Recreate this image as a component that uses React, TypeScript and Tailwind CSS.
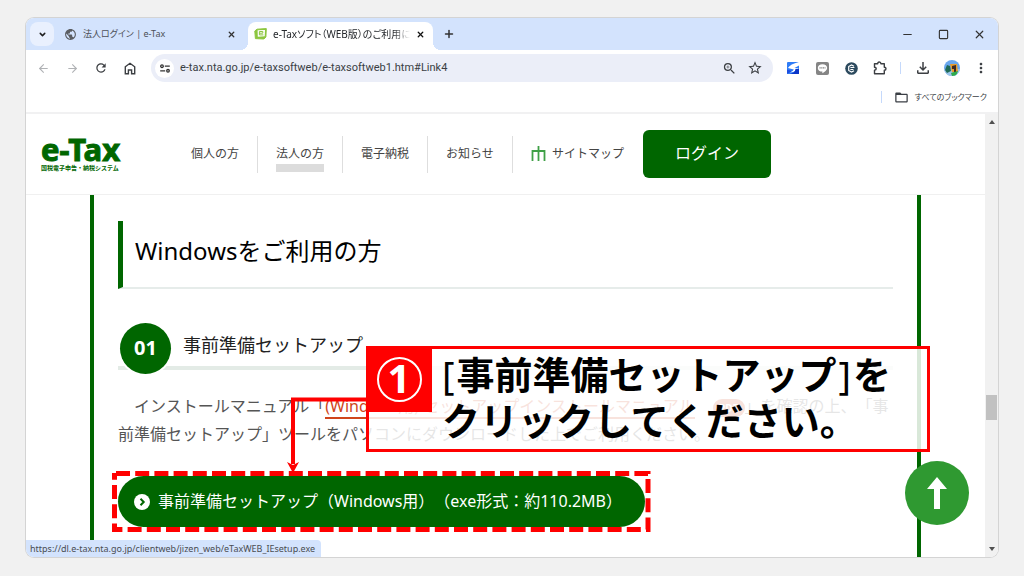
import type { ReactNode } from "react";
import {
  ArrowLeft,
  ArrowRight,
  ChevronDown,
  Minus,
  Plus,
  Square,
  X,
} from "lucide-react";
import {
  MdFolderOpen,
  MdMoreVert,
  MdOutlineFileDownload,
  MdPublic,
  MdRefresh,
  MdStarBorder,
  MdZoomIn,
} from "react-icons/md";

const NAV = [
  { label: "個人の方", active: false },
  { label: "法人の方", active: true },
  { label: "電子納税", active: false },
  { label: "お知らせ", active: false },
];

function IconButton({ label, children }: { label: string; children: ReactNode }) {
  return (
    <button
      type="button"
      aria-label={label}
      className="flex size-5 shrink-0 items-center justify-center text-[#3c3f43]"
    >
      {children}
    </button>
  );
}

function TabBar() {
  return (
    <div className="flex h-8 shrink-0 items-stretch bg-[#d3e3fd] pl-1">
      <button
        type="button"
        aria-label="タブを検索"
        className="mt-1 flex size-6 items-center justify-center rounded-lg bg-[#e9f0fe] text-[#1f1f1f]"
      >
        <ChevronDown size={9} strokeWidth={4} />
      </button>
      <div className="ml-2.5 flex w-[184px] items-center gap-1.5 pr-3">
        <MdPublic size={13} className="shrink-0 text-[#5a5d62]" />
        <span className="min-w-0 flex-1 whitespace-nowrap text-[9px] text-[#4c5057] [font-feature-settings:'palt']">
          法人ログイン | e-Tax
        </span>
        <button type="button" aria-label="タブを閉じる" className="text-[#333]">
          <X size={9} strokeWidth={3.5} />
        </button>
      </div>
      <div className="relative mt-1 flex w-[185px] items-center gap-1.5 rounded-t-lg bg-white pb-1 pl-1.5 pr-2">
        <span className="absolute -left-2 bottom-0 size-2 bg-[radial-gradient(circle_at_0_0,#d3e3fd_8px,#fff_8px)]" />
        <span className="absolute -right-2 bottom-0 size-2 bg-[radial-gradient(circle_at_100%_0,#d3e3fd_8px,#fff_8px)]" />
        <svg viewBox="0 0 13 12" className="h-3 w-[13px] shrink-0">
          <path d="M.8 3 3 1.200l9.300-.6-.4 8.400-2 2-8.500-.4Z" fill="#8cc63f" stroke="#8cc63f" strokeLinejoin="round" />
          <path d="M3.600 2.300 11 1.900l-.3 6.300-6.900.5Z" fill="#fff" />
          <path d="M5.400 5.200h3.400V3.500H5.400v3.400h4" fill="none" stroke="#8cc63f" strokeWidth="1" />
        </svg>
        <span className="min-w-0 flex-1 overflow-hidden whitespace-nowrap text-[10px] text-[#25282c] [font-feature-settings:'palt'] [mask-image:linear-gradient(to_right,#000_88%,transparent)]">
          e-Taxソフト（WEB版）のご利用に
        </span>
        <button type="button" aria-label="タブを閉じる" className="text-[#111]">
          <X size={9} strokeWidth={3.5} />
        </button>
      </div>
      <button type="button" aria-label="新しいタブ" className="ml-2.5 text-[#333]">
        <Plus size={12} strokeWidth={3} />
      </button>
      <div className="ml-auto flex items-center gap-6 pr-3 text-[#333]">
        <button type="button" aria-label="最小化">
          <Minus size={13} />
        </button>
        <button type="button" aria-label="最大化">
          <Square size={11} strokeWidth={2.5} />
        </button>
        <button type="button" aria-label="閉じる">
          <X size={13} strokeWidth={2.2} />
        </button>
      </div>
    </div>
  );
}

function Toolbar() {
  return (
    <div className="shrink-0 border-b-2 border-[#f1f1f2] bg-white">
      <div className="flex items-center px-[7px] pt-1">
        <div className="flex gap-[9px]">
          <button type="button" aria-label="戻る" className="flex size-5 items-center justify-center text-[#b0b2b5]">
            <ArrowLeft size={13} />
          </button>
          <button type="button" aria-label="進む" className="flex size-5 items-center justify-center text-[#b0b2b5]">
            <ArrowRight size={13} />
          </button>
          <IconButton label="再読み込み">
            <MdRefresh size={14} />
          </IconButton>
          <IconButton label="ホーム">
            <svg viewBox="0 0 12 13" className="h-[13px] w-3" fill="none" stroke="currentColor" strokeWidth="1.4">
              <path d="M1.3 4.8 6 1.3l4.7 3.5v7H7.6V8H4.4v3.8H1.3Z" />
            </svg>
          </IconButton>
        </div>
        <div className="ml-[11px] flex h-7 min-w-0 flex-1 items-center rounded-full bg-[#ebeef8] pl-1 pr-2">
          <span className="flex size-[19px] shrink-0 items-center justify-center rounded-full bg-white">
            <svg viewBox="0 0 10 9" className="h-[9px] w-2.5" fill="none" stroke="#333" strokeWidth="1.3">
              <circle cx="2" cy="2.2" r="1.3" />
              <path d="M4.8 2.2H9.8M.2 6.8h5" />
              <circle cx="8" cy="6.8" r="1.3" />
            </svg>
          </span>
          <input
            aria-label="アドレス"
            defaultValue="e-tax.nta.go.jp/e-taxsoftweb/e-taxsoftweb1.htm#Link4"
            className="ml-1.5 min-w-0 flex-1 bg-transparent font-['Roboto','Noto_Sans_CJK_JP',sans-serif] text-[11px] text-[#3a3e44] outline-none"
          />
          <div className="flex gap-1.5">
            <IconButton label="拡大">
              <MdZoomIn size={15} />
            </IconButton>
            <IconButton label="ブックマークに追加">
              <MdStarBorder size={16} />
            </IconButton>
          </div>
        </div>
        <div className="ml-2.5 flex items-center gap-[9px]">
          <IconButton label="画面キャプチャ">
            <svg viewBox="0 0 12 12" className="size-3">
              <rect width="12" height="12" rx="1" fill="#2f7cf6" />
              <path d="M0 7.500 5 9 0 12Z" fill="#1d4fe0" />
              <path d="M12 0v3.500L7.500 6l4 .5Q9.500 10 3 10.500 6.500 9 6.800 7.500L1 6Q3 2 12 0Z" fill="#fff" />
              <path d="M8.500 7H12v5H3q5-1 5.500-5Z" fill="#0a35c8" />
            </svg>
          </IconButton>
          <IconButton label="LINE">
            <svg viewBox="0 0 13 13" className="size-[13px]">
              <rect width="13" height="13" rx="2" fill="#858585" />
              <path d="M6.500 2.200c2.700 0 4.700 1.600 4.700 3.700 0 2.300-2.700 4-4.900 5.400l.1-1.700c-2.700 0-4.600-1.600-4.600-3.700s2-3.700 4.700-3.700Z" fill="#fff" />
              <path d="M3.500 5.900h6" stroke="#858585" strokeWidth="1.200" strokeDasharray="1.200 .5" />
            </svg>
          </IconButton>
          <IconButton label="拡張機能 C">
            <svg viewBox="0 0 13 13" className="size-[13px]">
              <circle cx="6.500" cy="6.500" r="6.300" fill="#2c4a5e" />
              <path d="M9 4.300 6.500 3 3.700 4.600v3.800l2.800 1.600L9 8.700M5.400 5.500h4M5.400 7.500h3" fill="none" stroke="#fff" strokeWidth="1.200" />
            </svg>
          </IconButton>
          <IconButton label="拡張機能">
            <svg viewBox="0 0 14 14" className="size-3.5" fill="none" stroke="currentColor" strokeWidth="1.400" strokeLinejoin="round">
              <path d="M1.500 2.800h3.200q0-1.800 1.600-1.800t1.600 1.800h3.400v3.400q1.700 0 1.700 1.500t-1.700 1.500v3.500H1.500V9.300q1.700-.2 1.700-1.600T1.500 6.200Z" />
            </svg>
          </IconButton>
        </div>
        <span className="ml-2.5 h-3 w-px bg-[#c5d9fb]" />
        <div className="ml-3 flex items-center gap-[9px]">
          <IconButton label="ダウンロード">
            <MdOutlineFileDownload size={18} />
          </IconButton>
          <IconButton label="プロフィール">
            <svg viewBox="0 0 16 16" className="size-4">
              <clipPath id="avatar">
                <circle cx="8" cy="8" r="8" />
              </clipPath>
              <g clipPath="url(#avatar)">
                <path d="M0 0h16v16H0Z" fill="#6aa7ee" />
                <path d="M0 9h16v7H0Z" fill="#9bc4ea" />
                <path d="M1 10 3 5l3 1 1 5-4 2Z" fill="#1f6b57" />
                <path d="M6 4h7l1 8H8Z" fill="#e79b2c" />
                <path d="m8 6 4-1v7h-2V9H8Z" fill="#3b2a24" />
                <path d="m7 13 3-1 4-1-2 5H8Z" fill="#2eab4a" />
              </g>
            </svg>
          </IconButton>
          <IconButton label="メニュー">
            <MdMoreVert size={16} />
          </IconButton>
        </div>
      </div>
      <div className="flex h-[30px] items-center justify-end pr-[11px]">
        <span className="h-3 w-px bg-[#c5d9fb]" />
        <button
          type="button"
          className="ml-3 flex items-center gap-1.5 text-[8px] text-[#3a3e44] [font-feature-settings:'palt']"
        >
          <MdFolderOpen size={15} />
          すべてのブックマーク
        </button>
      </div>
    </div>
  );
}

function SiteHeader() {
  return (
    <header className="flex h-[81px] shrink-0 items-start border-b border-[#f0f0f0] pl-[15px] pt-4">
      <a href="#top" className="flex w-[132px] shrink-0 flex-col text-[#006600]">
        <span className="mt-1 text-[31px] font-bold leading-[30px] [-webkit-text-stroke:1px_#006600]">e-Tax</span>
        <span className="whitespace-nowrap text-[6px] font-bold leading-2">
          国税電子申告・納税システム
        </span>
      </a>
      <nav className="mt-1.5 flex">
        {NAV.map((item) => (
          <a
            key={item.label}
            href="#nav"
            className="flex h-[37px] w-[85px] flex-col items-center border-r border-[#dedede] pt-2 text-xs leading-5 text-[#444]"
          >
            {item.label}
            {item.active && <span className="h-2 w-12 shrink-0 bg-[#dcdcdc]" />}
          </a>
        ))}
        <a href="#sitemap" className="ml-[18px] flex h-[37px] items-start gap-1.5 pt-2 text-xs leading-5 text-[#444]">
          <svg viewBox="0 0 15 15" className="mt-0.5 size-[15px]" fill="none" stroke="#3fa046" strokeWidth="1.800">
            <path d="M1.500 15V5h12v10M7.500 0v15" />
          </svg>
          サイトマップ
        </a>
      </nav>
      <button
        type="button"
        className="ml-[19px] h-12 w-32 shrink-0 rounded-md bg-[#006600] pb-0.5 text-base text-white"
      >
        ログイン
      </button>
    </header>
  );
}

function Guide() {
  return (
    <main className="mx-16 flex-1 border-x-4 border-[#006600] px-6 pt-[26px]">
      <h1 className="flex h-[68px] items-center border-b-2 border-l-[5px] border-b-[#e6ecea] border-l-[#006600] pb-1.5 pl-3 text-2xl text-black">
        Windowsをご利用の方
      </h1>
      <div className="mt-[34px] flex h-[47px] items-start gap-3 border-b-4 border-[#e3ebe6] pl-0.5">
        <span className="z-10 flex size-[51px] shrink-0 items-center justify-center rounded-full bg-[#006600] pb-0.5 text-xl font-bold text-white ring-2 ring-white">
          01
        </span>
        <h2 className="pt-2 text-lg leading-7 text-[#222]">事前準備セットアップ</h2>
      </div>
      <p className="mt-[22px] indent-4 whitespace-nowrap text-base leading-7 text-[#555]">
        インストールマニュアル「
        <a href="#manual" className="border-b-2 border-[#d0451b] text-[#d0451b]">
          (Windows用) セットアップインストールマニュアル
        </a>
        <span className="ml-[18px] inline-flex h-[18px] w-8 items-center justify-center rounded-full bg-[#d0451b] indent-0 text-[10px] font-bold text-white">
          PDF
        </span>
        」を確認の上、「事
        <br />
        前準備セットアップ」ツールをパソコンにダウンロードした上でご利用ください。
      </p>
      <a
        href="#download"
        className="mt-7 inline-flex h-[51px] w-[527px] items-center gap-2 whitespace-nowrap rounded-full bg-[#006600] pb-0.5 pl-4 text-base text-white"
      >
        <svg viewBox="0 0 16 16" className="mt-0.5 size-4 shrink-0">
          <circle cx="8" cy="8" r="8" fill="#fff" />
          <path d="m6.500 4.800 3.200 3.200-3.200 3.200" fill="none" stroke="#006600" strokeWidth="2" />
        </svg>
        事前準備セットアップ（Windows用）（exe形式：約110.2MB）
      </a>
    </main>
  );
}

function Scrollbar() {
  return (
    <div className="flex w-[13px] shrink-0 flex-col items-center bg-[#f1f1f1]">
      <svg viewBox="0 0 6 4" className="mt-1.5 h-1 w-1.5 shrink-0">
        <path d="m3 0 3 4H0Z" fill="#505050" />
      </svg>
      <div className="min-h-0 flex-[270]" />
      <div className="h-[25px] w-[11px] shrink-0 bg-[#c1c1c1]" />
      <div className="min-h-0 flex-[127]" />
      <svg viewBox="0 0 6 4" className="mb-1.5 h-1 w-1.5 shrink-0">
        <path d="M0 0h6L3 4Z" fill="#505050" />
      </svg>
    </div>
  );
}

function Annotations() {
  return (
    <>
      <svg
        viewBox="0 0 540 140"
        className="absolute left-[112px] top-[394px] h-[140px] w-[540px]"
        fill="none"
        stroke="#ff0000"
      >
        <path d="M258 5.500H181V70" strokeWidth="4" />
        <path d="m175 68 6 3 6-3-6 11Z" fill="#ff0000" stroke="none" />
        <path
          d="M4 79.500H536V135.500H2.500V79"
          strokeWidth="5"
          strokeDasharray="14 5.200"
        />
      </svg>
      <aside className="absolute left-[366px] top-[346px] h-[106px] w-[564px] border-[3px] border-[#ff0000] bg-white/85">
        <span className="absolute -left-[3px] -top-[3px] flex size-[66px] items-center justify-center bg-[#ff0000]">
          <span className="flex size-[45px] items-center justify-center rounded-full border-2 border-white pb-0.5 text-[40px] font-bold leading-none text-white">
            1
          </span>
        </span>
        <p className="whitespace-nowrap pl-[73px] pt-0.5 text-[38px] font-bold leading-[46px] text-black">
          <span className="pr-0.5 font-normal">[</span>事前準備セットアップ
          <span className="px-0.5 font-normal">]</span>を
          <br />
          クリックしてください。
        </p>
      </aside>
    </>
  );
}

export default function App() {
  return (
    <div className="relative flex min-h-screen flex-col bg-[#f1f1f1] px-[26px] pb-[19px] pt-[18px] font-['Noto_Sans','Noto_Sans_CJK_JP',sans-serif] [text-spacing-trim:space-all]">
      <div className="relative flex flex-1 flex-col overflow-hidden rounded-lg bg-white shadow-[0_0_0_1px_#d4d4d4]">
        <TabBar />
        <Toolbar />
        <div className="flex flex-1">
          <div className="flex min-w-0 flex-1 flex-col">
            <SiteHeader />
            <Guide />
          </div>
          <Scrollbar />
        </div>
        <div className="absolute bottom-0 left-0 flex h-[17px] items-center rounded-tr bg-[#d3e3fd] pl-1 pr-1.5 text-[9px] text-[#4a4d52]">
          https://dl.e-tax.nta.go.jp/clientweb/jizen_web/eTaxWEB_IEsetup.exe
        </div>
        <button
          type="button"
          aria-label="ページの先頭へ"
          className="absolute bottom-8 right-[29px] flex size-16 items-center justify-center rounded-full bg-[#2f9931]"
        >
          <svg viewBox="0 0 20 32" className="h-8 w-5">
            <path d="m10 0 10 12h-7v20H7V12H0Z" fill="#fff" />
          </svg>
        </button>
      </div>
      <Annotations />
    </div>
  );
}
